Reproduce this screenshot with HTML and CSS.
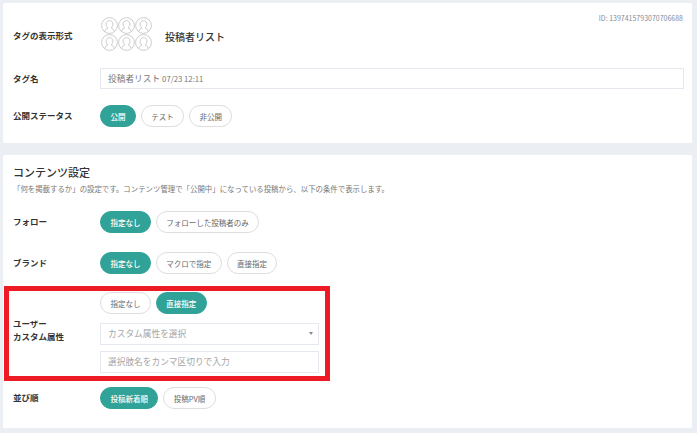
FILE: index.html
```html
<!DOCTYPE html>
<html lang="ja">
<head>
<meta charset="utf-8">
<title>タグ設定</title>
<link rel="stylesheet" href="styles.css">
</head>
<body>
<svg class="defs" width="0" height="0" aria-hidden="true">
  <symbol id="avatar" viewBox="0 0 17 17">
    <circle cx="8.500" cy="8.500" r="7.900" fill="none" stroke="#c6c6c6" stroke-width="0.9"/>
    <path d="M3.900 14.200c.3-1.800 1.300-2.600 3-3.200-1.200-1-1.800-2.300-1.800-3.900C5.100 5 6.500 3.600 8.500 3.600s3.400 1.400 3.400 3.500c0 1.600-.6 2.900-1.800 3.900 1.700.6 2.700 1.400 3 3.200" fill="none" stroke="#c6c6c6" stroke-width="0.9"/>
  </symbol>
</svg>
<main class="page">
  <section class="card card-top">
    <div class="id">ID: 1397415793070706688</div>
    <div class="row row-format">
      <div class="label">タグの表示形式</div>
      <div class="avatars">
        <svg class="avatar"><use href="#avatar"/></svg>
        <svg class="avatar"><use href="#avatar"/></svg>
        <svg class="avatar"><use href="#avatar"/></svg>
        <svg class="avatar"><use href="#avatar"/></svg>
        <svg class="avatar"><use href="#avatar"/></svg>
        <svg class="avatar"><use href="#avatar"/></svg>
      </div>
      <div class="format-name">投稿者リスト</div>
    </div>
    <div class="row row-name">
      <div class="label">タグ名</div>
      <div class="field field-wide"><span class="value">投稿者リスト <span class="value-small">07/23 12:11</span></span></div>
    </div>
    <div class="row row-status">
      <div class="label">公開ステータス</div>
      <div class="pills">
        <span class="pill active">公開</span>
        <span class="pill">テスト</span>
        <span class="pill">非公開</span>
      </div>
    </div>
  </section>

  <section class="card card-content">
    <h2 class="heading">コンテンツ設定</h2>
    <p class="desc">「何を掲載するか」の設定です。コンテンツ管理で「公開中」になっている投稿から、以下の条件で表示します。</p>
    <div class="row row-follow">
      <div class="label">フォロー</div>
      <div class="pills">
        <span class="pill active">指定なし</span>
        <span class="pill">フォローした投稿者のみ</span>
      </div>
    </div>
    <div class="row row-brand">
      <div class="label">ブランド</div>
      <div class="pills">
        <span class="pill active">指定なし</span>
        <span class="pill">マクロで指定</span>
        <span class="pill">直接指定</span>
      </div>
    </div>
    <div class="row row-user">
      <div class="label label-user">ユーザー<br>カスタム属性</div>
      <div class="stack">
        <div class="pills">
          <span class="pill">指定なし</span>
          <span class="pill active">直接指定</span>
        </div>
        <div class="field field-select"><span class="placeholder">カスタム属性を選択</span><span class="caret"></span></div>
        <div class="field field-text"><span class="placeholder">選択肢名をカンマ区切りで入力</span></div>
      </div>
    </div>
    <div class="row row-order">
      <div class="label">並び順</div>
      <div class="pills">
        <span class="pill active">投稿新着順</span>
        <span class="pill">投稿PV順</span>
      </div>
    </div>
  </section>
</main>
<div class="highlight"></div>
</body>
</html>
```
FILE: styles.css
```css
* { box-sizing: border-box; }
html, body { margin: 0; height: 100%; }
body {
  position: relative;
  width: 697px;
  height: 433px;
  overflow: hidden;
  background: #ebeef3;
  font-family: "Noto Sans CJK JP", "Noto Sans", sans-serif;
  color: #333;
}
.defs { position: absolute; }
.page { padding: 3px 5px 0 3px; }
.card {
  position: relative;
  background: #fff;
  border-radius: 2px;
  padding-left: 10px;
}
.card-top { height: 140px; padding-top: 14px; }
.card-content { height: 273px; margin-top: 12px; padding-top: 9px; }
.id {
  position: absolute;
  top: 10px;
  right: 9px;
  font-size: 7px;
  line-height: 10px;
  color: #868b99;
}
.row { display: flex; align-items: center; }
.label {
  width: 87px;
  flex: none;
  font-size: 8.500px;
  line-height: 15px;
  padding-bottom: 1px;
  font-weight: 700;
  color: #333;
}
.label-user { line-height: 13.500px; padding-bottom: 5px; }
.row-format { height: 38px; }
.avatars {
  display: grid;
  grid-template-columns: repeat(3, 17px);
  align-self: flex-start;
  margin-left: 1px;
  width: 64px;
}
.avatar { width: 17px; height: 17px; display: block; }
.format-name { font-size: 10px; font-weight: 500; color: #333; }
.row-name { height: 21px; margin-top: 13px; }
.row-status { margin-top: 16px; }
.field {
  height: 22px;
  border: 1px solid #e6e8ef;
  padding: 0 7px 1px;
  display: flex;
  align-items: center;
  color: #888;
}
.field-wide { width: 584px; height: 21px; padding-bottom: 0; }
.value { color: #777; font-size: 8.700px; }
.value-small { font-size: 7.750px; }
.pills { display: flex; gap: 5px; }
.pill {
  height: 22px;
  border: 1px solid #dedede;
  border-radius: 11px;
  padding: 0 9.400px;
  display: flex;
  align-items: center;
  font-size: 7.500px;
  color: #666;
  background: #fff;
}
.pill.active {
  background: #30a298;
  border-color: #30a298;
  color: #fff;
  font-weight: 500;
}
.heading {
  margin: 0;
  font-size: 11px;
  line-height: 17px;
  font-weight: 500;
  color: #333;
}
.desc {
  margin: 2px 0 0;
  font-size: 7.420px;
  line-height: 12px;
  color: #777;
  white-space: nowrap;
}
.row-follow { margin-top: 16px; }
.row-brand { margin-top: 19px; }
.row-user { margin-top: 18px; }
.row-order { margin-top: 14px; }
.stack { display: flex; flex-direction: column; }
.field-select {
  width: 219px;
  margin-top: 9px;
  justify-content: space-between;
}
.field-text { width: 219px; margin-top: 6px; }
.placeholder { color: #a5a5a5; font-size: 8.700px; }
.caret {
  width: 0;
  height: 0;
  border-left: 2.500px solid transparent;
  border-right: 2.500px solid transparent;
  border-top: 3.500px solid #888;
  margin-right: -2px;
}
.highlight {
  position: absolute;
  left: 4px;
  top: 286px;
  width: 326px;
  height: 95px;
  border: 5px solid #ed1c24;
}
```
